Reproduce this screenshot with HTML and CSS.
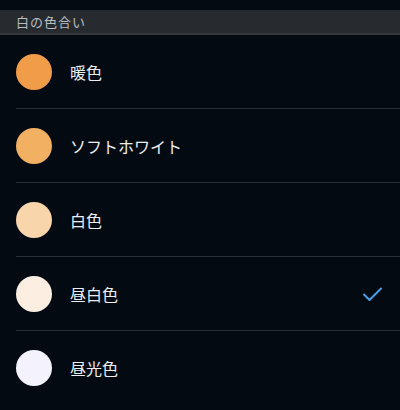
FILE: index.html
```html
<!DOCTYPE html>
<html lang="ja">
<head>
<meta charset="utf-8">
<link rel="stylesheet" href="styles.css">
</head>
<body>
<div class="header">白の色合い</div>
<ul class="list">
  <li class="row"><span class="dot c1"></span><span class="label">暖色</span></li>
  <li class="row"><span class="dot c2"></span><span class="label">ソフトホワイト</span></li>
  <li class="row"><span class="dot c3"></span><span class="label">白色</span></li>
  <li class="row"><span class="dot c4"></span><span class="label">昼白色</span>
    <svg class="check" width="24" height="24" viewBox="0 0 24 24"><path d="M4 12.5 L9.5 18 L21 6.5" fill="none" stroke="#4a9fe8" stroke-width="2" stroke-linecap="round" stroke-linejoin="round"/></svg>
  </li>
  <li class="row"><span class="dot c5"></span><span class="label">昼光色</span></li>
</ul>
</body>
</html>
```

FILE: styles.css
```css
html, body {
  margin: 0;
  padding: 0;
  background: #030a12;
  font-family: "Noto Sans CJK JP", "Noto Sans", sans-serif;
}
body {
  padding-top: 10px;
}
.header {
  height: 23px;
  line-height: 23px;
  background: #272b30;
  border-bottom: 2px solid #34383d;
  color: #b9bdc2;
  font-size: 13px;
  padding-left: 16px;
  letter-spacing: 1px;
}
.list {
  list-style: none;
  margin: 0;
  padding: 0 0 0 16px;
}
.row {
  display: flex;
  align-items: center;
  height: 73px;
  border-bottom: 1px solid #2a2f35;
}
.row:last-child {
  border-bottom: none;
}
.dot {
  width: 36px;
  height: 36px;
  border-radius: 50%;
  flex: none;
}
.c1 { background: #f09c48; }
.c2 { background: #f2b063; }
.c3 { background: #f8d5aa; }
.c4 { background: #fdeee2; }
.c5 { background: #f3f2fd; }
.label {
  margin-left: 18px;
  color: #eceef0;
  font-size: 16px;
  flex: 1;
}
.check {
  margin-right: 16px;
}
```
